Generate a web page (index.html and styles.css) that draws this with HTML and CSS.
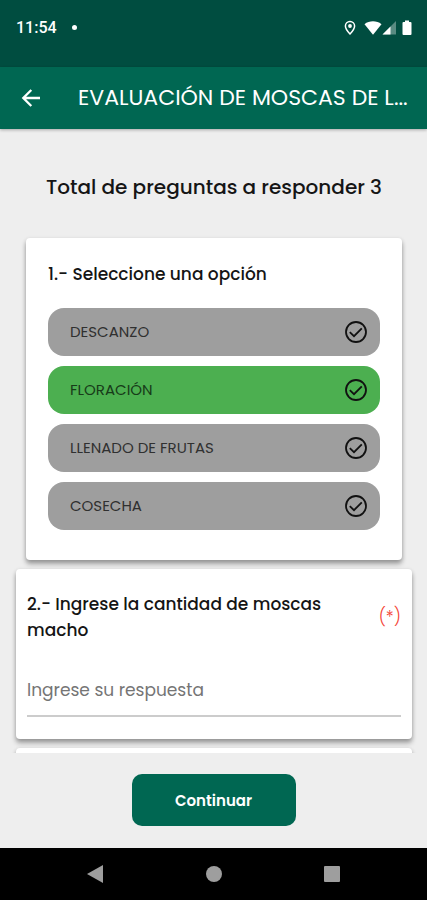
FILE: index.html
```html
<!DOCTYPE html>
<html lang="es">
<head>
<meta charset="utf-8">
<meta name="viewport" content="width=device-width, initial-scale=1">
<title>Evaluación de moscas</title>
<link rel="stylesheet" href="styles.css">
</head>
<body>
<svg class="sprite" aria-hidden="true">
  <symbol id="check" viewBox="0 0 24 24">
    <circle cx="12" cy="12" r="10" fill="none" stroke="currentColor" stroke-width="1.8"/>
    <path d="M5.800 12.200 10 16.200 17.800 8.300" fill="none" stroke="currentColor" stroke-width="1.8"/>
  </symbol>
</svg>
<div class="status">
  <span class="time">11:54</span>
  <span class="dot"></span>
  <div class="status-icons">
    <svg class="pin" width="12" height="16" viewBox="0 0 12 16" aria-hidden="true">
      <path d="M6 1.500A4.600 4.600 0 0 0 1.400 6C1.400 9.200 6 14 6 14s4.600-4.800 4.600-8A4.600 4.600 0 0 0 6 1.500Z" fill="none" stroke="#fff" stroke-width="1.500"/>
      <circle cx="6" cy="6" r="1.900" fill="#fff"/>
    </svg>
    <svg width="18" height="16" viewBox="0 0 18 16" aria-hidden="true">
      <path d="M.5 4.200C5.300.4 12.700.4 17.500 4.200L9 14.800Z" fill="#fff"/>
    </svg>
    <svg class="signal" width="14" height="16" viewBox="0 0 14 16" aria-hidden="true">
      <path d="M14 1v13.500H.5Z" fill="#fff" opacity=".35"/>
      <path d="M8.500 6.500v8H.5Z" fill="#fff"/>
    </svg>
    <svg width="10" height="16" viewBox="0 0 10 16" aria-hidden="true">
      <path d="M3 .5h4V2h1.500q1 0 1 1v11q0 1-1 1h-7q-1 0-1-1V3q0-1 1-1H3Z" fill="#fff"/>
    </svg>
  </div>
</div>
<header class="appbar">
  <button class="back" type="button" aria-label="Volver">
    <svg width="20" height="20" viewBox="0 0 20 20" aria-hidden="true">
      <path d="M19 10H2.500M10.300 2 2.300 10l8 8" fill="none" stroke="#fff" stroke-width="2.300"/>
    </svg>
  </button>
  <h1>EVALUACIÓN DE MOSCAS DE L...</h1>
</header>
<main class="content">
  <p class="total">Total de preguntas a responder 3</p>
  <section class="card choices">
    <h2>1.- Seleccione una opción</h2>
    <div class="options">
      <button type="button" class="option" aria-pressed="false">DESCANZO<svg><use href="#check"/></svg></button>
      <button type="button" class="option" aria-pressed="true">FLORACIÓN<svg><use href="#check"/></svg></button>
      <button type="button" class="option" aria-pressed="false">LLENADO DE FRUTAS<svg><use href="#check"/></svg></button>
      <button type="button" class="option" aria-pressed="false">COSECHA<svg><use href="#check"/></svg></button>
    </div>
  </section>
  <section class="card entry">
    <div class="question">
      <label for="machos">2.- Ingrese la cantidad de moscas macho</label>
      <span class="required">(*)</span>
    </div>
    <input id="machos" type="text" placeholder="Ingrese su respuesta">
  </section>
  <section class="card entry"></section>
</main>
<footer class="actions">
  <button class="continue" type="button">Continuar</button>
</footer>
<nav class="system">
  <button type="button" aria-label="Atrás"><svg width="18" height="20" viewBox="0 0 18 20"><path d="M17 1v18L1 10Z"/></svg></button>
  <button type="button" aria-label="Inicio"><svg width="18" height="20" viewBox="0 0 18 20"><circle cx="9" cy="10" r="8"/></svg></button>
  <button type="button" aria-label="Recientes"><svg width="18" height="20" viewBox="0 0 18 20"><rect x="1" y="2" width="16" height="16" rx="1"/></svg></button>
</nav>
</body>
</html>
```
FILE: styles.css
```css
* { box-sizing: border-box; }

body {
  margin: 0;
  height: 100vh;
  display: flex;
  flex-direction: column;
  background: #eee;
  color: #151515;
  font-family: Poppins, Inter, "Open Sans", sans-serif;
  font-size: 16px;
}

button, input { font: inherit; color: inherit; }
button { border: 0; padding: 0; background: none; }
svg { display: block; flex: none; }
h1, h2, p { margin: 0; }

.sprite { position: absolute; width: 0; height: 0; }

.status {
  display: flex;
  align-items: center;
  height: 67px;
  padding: 0 15px 12px 16px;
  background: #004d40;
  color: #fff;
  flex: none;
}
.time { font: 500 16px/20px Roboto, sans-serif; }
.dot {
  width: 5px;
  height: 5px;
  margin-left: 15px;
  border-radius: 50%;
  background: #fff;
}
.status-icons { display: flex; align-items: center; margin-left: auto; }
.pin { margin-right: 8px; }
.signal { margin-right: 6px; }

.appbar {
  display: flex;
  align-items: center;
  height: 62px;
  padding: 0 12px 0 21px;
  background: #006752;
  color: #fff;
  box-shadow: 0 1px 3px rgba(0, 0, 0, .3);
  flex: none;
  z-index: 1;
}
.appbar h1 {
  margin-left: 37px;
  font-size: 22px;
  font-weight: 400;
  line-height: 36px;
  white-space: nowrap;
}

.content { flex: 1; min-height: 0; overflow: hidden; padding: 0 15px 0 16px; }
.total {
  padding: 44px 0 37px;
  font-size: 20px;
  font-weight: 500;
  line-height: 28px;
  text-align: center;
}

.card {
  background: #fff;
  border-radius: 4px;
  box-shadow: 0 4px 5px rgba(0, 0, 0, .32), 0 1px 4px rgba(0, 0, 0, .12);
}
.choices { margin: 0 10px 9px; padding: 22px 22px 30px; }
.choices h2 {
  margin-bottom: 20px;
  font-size: 17px;
  font-weight: 500;
  line-height: 28px;
}
.options { display: flex; flex-direction: column; gap: 10px; }
.option {
  display: flex;
  align-items: center;
  justify-content: space-between;
  height: 48px;
  padding: 0 12px 1px 22px;
  border-radius: 16px;
  background: #9e9e9e;
  color: #303030;
  font-size: 15px;
}
.option[aria-pressed="true"] { background: #4caf50; color: #173b19; }
.option svg { width: 24px; height: 24px; color: #111; }

.entry { min-height: 169px; margin-bottom: 9px; padding: 22px 11px; }
.question { display: flex; align-items: center; justify-content: space-between; gap: 16px; }
.question label {
  max-width: 320px;
  font-size: 17px;
  font-weight: 500;
  line-height: 26px;
}
.required { color: #f44336; font-size: 17px; font-weight: 300; }
.entry input {
  display: block;
  width: 100%;
  height: 52px;
  margin-top: 22px;
  padding: 0;
  border: 0;
  border-bottom: 2px solid #ccc;
  border-radius: 0;
  background: none;
  font-size: 17px;
}
.entry input::placeholder { color: #757575; opacity: 1; }

.actions { display: flex; justify-content: center; padding: 21px 0 22px; flex: none; }
.continue {
  min-width: 164px;
  height: 52px;
  border-radius: 10px;
  background: #006752;
  color: #fff;
  font-size: 15px;
  font-weight: 600;
}

.system {
  display: flex;
  justify-content: space-between;
  align-items: center;
  height: 52px;
  padding: 0 86px;
  background: #000;
  fill: #9e9e9e;
  flex: none;
}
```
